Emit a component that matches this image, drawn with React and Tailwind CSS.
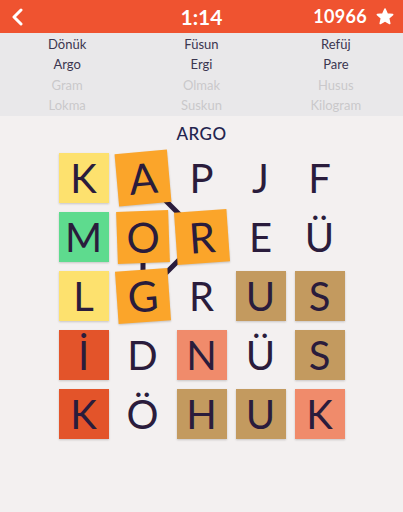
import React from 'react'

const words = [
    ['Dönük', 'Füsun', 'Refüj', true],
    ['Argo', 'Ergi', 'Pare', true],
    ['Gram', 'Olmak', 'Husus', false],
    ['Lokma', 'Suskun', 'Kilogram', false],
]

const Y = 'bg-[#fde16e]'
const O = 'bg-[#fba52a]'
const G = 'bg-[#5edb8e]'
const B = 'bg-[#c39a5f]'
const R = 'bg-[#e3542a]'
const S = 'bg-[#f08b6b]'

// letter, tile colour, selected rotation
const grid = [
    [['K', Y], ['A', O, '-rotate-[5deg] scale-[1.05]'], ['P'], ['J'], ['F']],
    [['M', G], ['O', O, '-rotate-[2deg] scale-[1.04]'], ['R', O, '-rotate-[4deg] scale-[1.05]'], ['E'], ['Ü']],
    [['L', Y], ['G', O, '-rotate-[4deg] scale-[1.05]'], ['R'], ['U', B], ['S', B]],
    [['İ', R], ['D'], ['N', S], ['Ü'], ['S', B]],
    [['K', R], ['Ö'], ['H', B], ['U', B], ['K', S]],
]

const Tile = ({ letter, color, rot }) => (
    <div
        className={`relative z-10 w-[50px] h-[50px] flex items-center justify-center text-[40px] leading-none text-[#2a1c3c] ${color ? color + ' shadow-[0_1px_2px_rgba(0,0,0,0.18)]' : ''} ${rot || ''}`}
    >
        {letter}
    </div>
)

export default function App() {
    return (
        <div className="w-[403px] h-[512px] bg-[#f3f0f0] font-['Lato',sans-serif] overflow-hidden">
            {/* header */}
            <div className="h-[33px] bg-[#ef5330] flex items-center justify-between pl-[11px] pr-[9px] text-white">
                <svg width="14" height="18" viewBox="0 0 14 18" fill="none">
                    <path d="M10 2 L3 9 L10 16" stroke="white" strokeWidth="3" strokeLinecap="round" strokeLinejoin="round" />
                </svg>
                <div className="absolute left-0 right-0 text-center text-[21px] font-bold pointer-events-none">1:14</div>
                <div className="flex items-center gap-[9px]">
                    <span className="text-[18px] font-bold tracking-[0.3px]">10966</span>
                    <svg width="18" height="17" viewBox="0 0 24 23">
                        <path d="M12 1.5 L15 8.2 L22.3 8.9 L16.8 13.8 L18.4 21 L12 17.3 L5.6 21 L7.2 13.8 L1.7 8.9 L9 8.2 Z" fill="white" stroke="white" strokeWidth="2.2" strokeLinejoin="round" />
                    </svg>
                </div>
            </div>

            {/* words */}
            <div className="bg-[#e9e8ea] pt-px pb-0">
                {words.map(([a, b, c, found], i) => (
                    <div key={i} className={`grid grid-cols-3 h-[20.5px] items-center text-center text-[13px] ${found ? 'text-[#3b3650]' : 'text-[#cac8cb]'}`}>
                        <span>{a}</span>
                        <span>{b}</span>
                        <span>{c}</span>
                    </div>
                ))}
            </div>

            <div className="text-center text-[17px] font-medium text-[#24244f] tracking-[0.5px] mt-[6px] h-[24px] leading-[24px]">ARGO</div>

            {/* board */}
            <div className="relative mx-auto mt-[7px] w-[286px] grid grid-cols-5 gap-[9px]">
                <svg className="absolute inset-0 z-0" width="286" height="286" viewBox="0 0 286 286">
                    <g stroke="#2a1c3c" strokeWidth="5" fill="none">
                        <line x1="84" y1="25" x2="143" y2="84" />
                        <line x1="143" y1="84" x2="84" y2="143" />
                        <line x1="84" y1="143" x2="84" y2="84" />
                    </g>
                </svg>
                {grid.map((row, r) =>
                    row.map(([l, c, rot], k) => <Tile key={r + '-' + k} letter={l} color={c} rot={rot} />)
                )}
            </div>
        </div>
    )
}
